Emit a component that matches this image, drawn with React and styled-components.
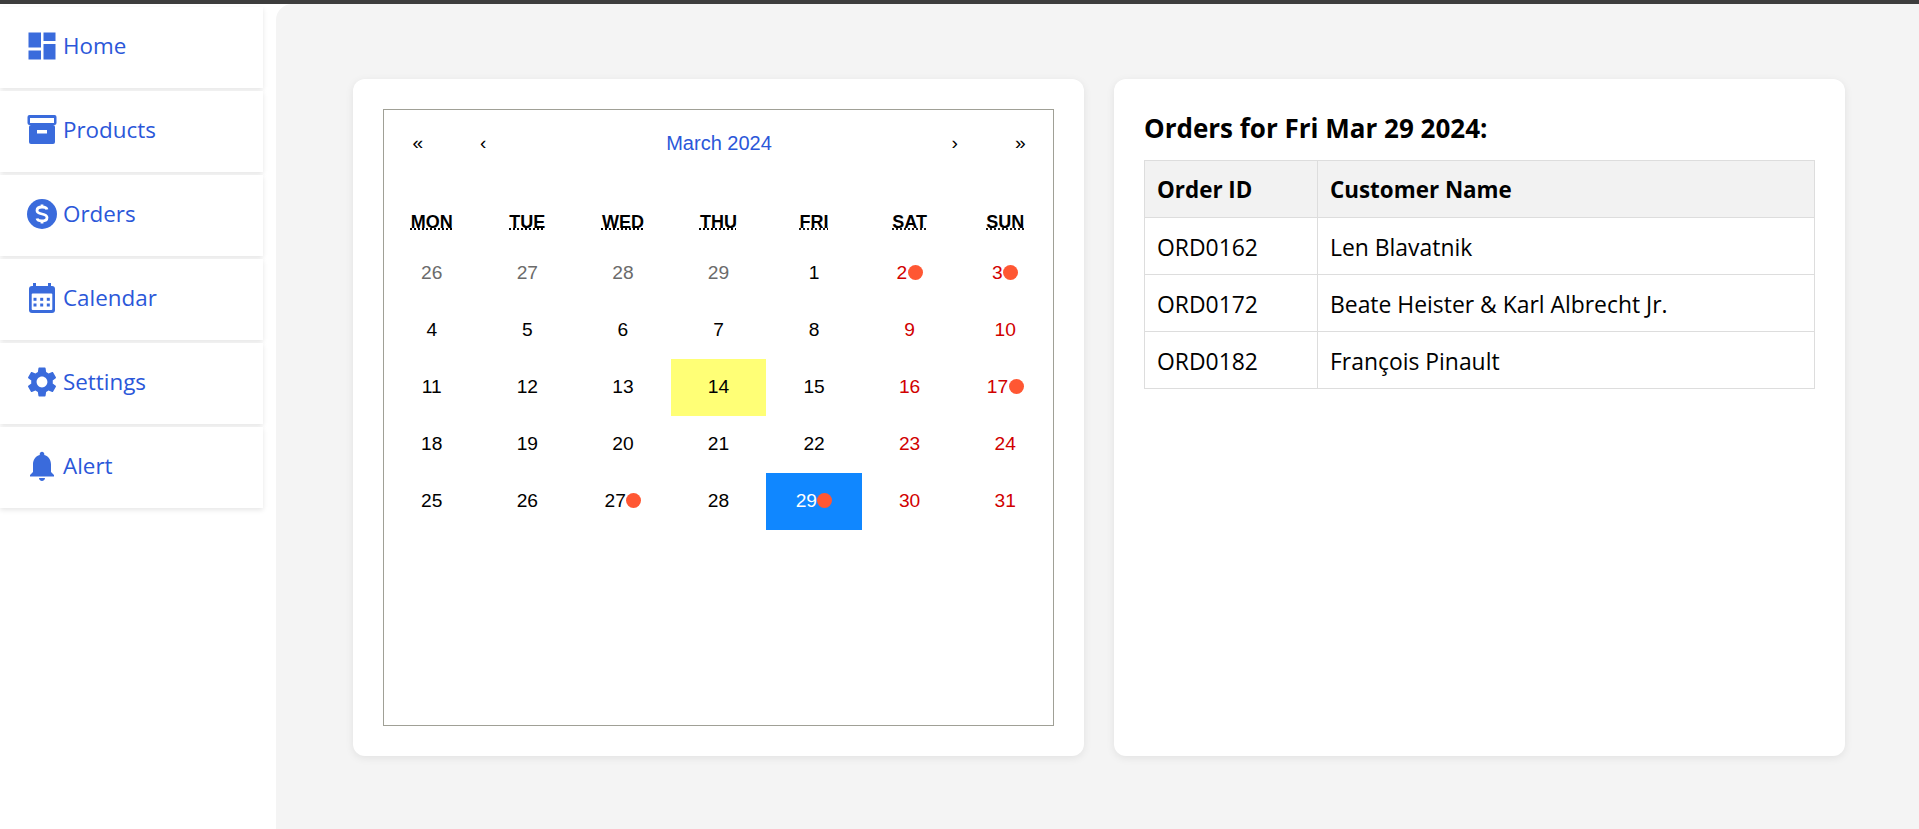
import React from 'react';
import styled, {createGlobalStyle} from 'styled-components';

const Global = createGlobalStyle`
    html, body {
        margin: 0;
        padding: 0;
        background: #fff;
    }
    * {
        box-sizing: border-box;
    }
`;

const Styled = {
    Page: styled.div`
        height: 100vh;
        display: flex;
        flex-direction: column;
        overflow: hidden;
        font-family: "Open Sans", "Noto Sans", sans-serif;
    `,
    TopBar: styled.div`
        height: 4px;
        flex: none;
        background: #3d3d3d;
    `,
    Body: styled.div`
        flex: 1;
        display: flex;
        min-height: 0;
    `,
    Sidebar: styled.nav`
        width: 276px;
        flex: none;
        padding-top: 3px;
        display: flex;
        flex-direction: column;
        gap: 3px;
    `,
    NavItem: styled.a`
        width: 263px;
        height: 81px;
        padding: 0 0 3px 27px;
        display: flex;
        align-items: center;
        gap: 6px;
        background: #fff;
        box-shadow: 0 2px 5px rgba(0, 0, 0, 0.1);
        color: #2b57d9;
        font-size: 22.4px;
        line-height: 30px;
    `,
    Icon: styled.svg`
        width: 30px;
        height: 30px;
        flex: none;
        display: block;
        fill: #3a6bdc;
    `,
    Main: styled.main`
        flex: 1;
        display: flex;
        gap: 30px;
        align-items: flex-start;
        padding: 75px 74px 0 77px;
        background: #f4f4f4;
        border-top-left-radius: 16px;
    `,
    Card: styled.section`
        width: 731px;
        height: 677px;
        padding: 30px;
        background: #fff;
        border-radius: 12px;
        box-shadow: 0 2px 8px rgba(0, 0, 0, 0.08);
    `,
    Calendar: styled.div`
        height: 100%;
        border: 1px solid #a0a096;
        font-family: "Liberation Sans", Arial, sans-serif;
    `,
    CalendarNav: styled.div`
        height: 66px;
        padding-left: 1px;
        display: flex;
        align-items: center;
    `,
    NavButton: styled.span`
        width: 65.5px;
        flex: none;
        text-align: center;
        font-size: 19.2px;
        color: #000;
    `,
    NavLabel: styled.span`
        flex: 1;
        text-align: center;
        font-size: 20px;
        color: #2b57d9;
    `,
    Weekdays: styled.div`
        height: 69px;
        padding-top: 36px;
        display: grid;
        grid-template-columns: repeat(7, 1fr);
    `,
    Weekday: styled.abbr`
        text-align: center;
        font-size: 18px;
        line-height: 21px;
        font-weight: 700;
        color: #000;
        text-decoration: underline dotted;
    `,
    Days: styled.div`
        display: grid;
        grid-template-columns: repeat(7, 1fr);
        grid-auto-rows: 57px;
    `,
    Day: styled.div`
        display: flex;
        align-items: center;
        justify-content: center;
        padding-bottom: 1px;
        font-size: 19.2px;
        color: ${p => ({muted: '#6b6b6b', weekend: '#d10000', active: '#fff'}[p.$tone] || '#000')};
        background: ${p => ({today: '#ffff76', active: '#1087ff'}[p.$tone] || 'transparent')};
    `,
    Dot: styled.span`
        width: 15px;
        height: 15px;
        margin: 0 0 1px 0.5px;
        border-radius: 50%;
        background: #ff5733;
    `,
    Title: styled.h2`
        margin: 0 0 13px;
        font-size: 26px;
        line-height: 38px;
        font-weight: 700;
        color: #000;
    `,
    Table: styled.table`
        width: 100%;
        border-collapse: collapse;
        table-layout: fixed;
        color: #000;
    `,
    Th: styled.th`
        height: 57px;
        padding: 1px 12px 0;
        text-align: left;
        font-size: 22.4px;
        font-weight: 700;
        background: #f2f2f2;
        border: 1px solid #ddd;
        width: ${p => p.$width || 'auto'};
    `,
    Td: styled.td`
        height: 57px;
        padding: 2px 12px 0;
        font-size: 22.9px;
        border: 1px solid #ddd;
    `
};

const HomeIcon = () => (
    <Styled.Icon viewBox="0 0 30 30">
        <rect x="1.5" y="1.5" width="12.5" height="15" />
        <rect x="16.5" y="1.5" width="12" height="8.5" />
        <rect x="1.5" y="19.5" width="12.5" height="9" />
        <rect x="16.5" y="13" width="12" height="15.5" />
    </Styled.Icon>
);

const ProductsIcon = () => (
    <Styled.Icon viewBox="0 0 30 30">
        <rect x="0.5" y="0" width="29" height="10" rx="2" />
        <rect x="3" y="3" width="24" height="5" fill="#fff" />
        <rect x="2" y="10" width="26" height="19" rx="2" />
        <rect x="10" y="15" width="10" height="3.5" fill="#fff" />
    </Styled.Icon>
);

const OrdersIcon = () => (
    <Styled.Icon viewBox="0 0 30 30">
        <circle cx="15" cy="15" r="15" />
        <path
            d="M20 10.5C19.5 8.5 17.5 8 15 8c-3 0-5 1.3-5 3.5 0 2.5 2.5 3 5 3.5s5 1 5 3.5c0 2.2-2 3.5-5 3.5-2.5 0-4.5-.5-5-2.5M15 5.5V8m0 14v2.5"
            fill="none"
            stroke="#fff"
            strokeWidth="2.8"
        />
    </Styled.Icon>
);

const CalendarIcon = () => (
    <Styled.Icon viewBox="0 0 30 30">
        <rect x="2" y="3" width="26" height="27" rx="3" />
        <rect x="6" y="0" width="3" height="5" />
        <rect x="21" y="0" width="3" height="5" />
        <rect x="4.7" y="10.5" width="20.6" height="16.5" rx="1" fill="#fff" />
        {[6.5, 13.2, 19.8].map(x => [14.8, 20.5].map(y => (
            <rect key={`${x}-${y}`} x={x} y={y} width="3" height="3" />
        )))}
    </Styled.Icon>
);

const SettingsIcon = () => (
    <Styled.Icon viewBox="2 2 20 20">
        <path d="M19.14 12.94c.04-.3.06-.61.06-.94 0-.32-.02-.64-.07-.94l2.03-1.58c.18-.14.23-.41.12-.61l-1.92-3.32c-.12-.22-.37-.29-.59-.22l-2.39.96c-.5-.38-1.03-.7-1.62-.94l-.36-2.54c-.04-.24-.24-.41-.48-.41h-3.84c-.24 0-.43.17-.47.41l-.36 2.54c-.59.24-1.13.57-1.62.94l-2.39-.96c-.22-.08-.47 0-.59.22L2.74 8.87c-.12.21-.08.47.12.61l2.03 1.58c-.05.3-.09.63-.09.94s.02.64.07.94l-2.03 1.58c-.18.14-.23.41-.12.61l1.92 3.32c.12.22.37.29.59.22l2.39-.96c.5.38 1.03.7 1.62.94l.36 2.54c.05.24.24.41.48.41h3.84c.24 0 .44-.17.47-.41l.36-2.54c.59-.24 1.13-.56 1.62-.94l2.39.96c.22.08.47 0 .59-.22l1.92-3.32c.12-.22.07-.47-.12-.61l-2.01-1.58zM12 15.6c-1.98 0-3.6-1.62-3.6-3.6s1.62-3.6 3.6-3.6 3.6 1.62 3.6 3.6-1.62 3.6-3.6 3.6z" />
    </Styled.Icon>
);

const AlertIcon = () => (
    <Styled.Icon viewBox="2 2 20 20">
        <path d="M12 22c1.1 0 2-.9 2-2h-4c0 1.1.89 2 2 2zm6-6v-5c0-3.07-1.64-5.64-4.5-6.32V4c0-.83-.67-1.5-1.5-1.5s-1.5.67-1.5 1.5v.68C7.63 5.36 6 7.92 6 11v5l-2 2v1h16v-1l-2-2z" />
    </Styled.Icon>
);

const navItems = [
    {label: 'Home', icon: <HomeIcon />},
    {label: 'Products', icon: <ProductsIcon />},
    {label: 'Orders', icon: <OrdersIcon />},
    {label: 'Calendar', icon: <CalendarIcon />},
    {label: 'Settings', icon: <SettingsIcon />},
    {label: 'Alert', icon: <AlertIcon />}
];

const weekdays = ['MON', 'TUE', 'WED', 'THU', 'FRI', 'SAT', 'SUN'];

const withOrders = [2, 3, 17, 27, 29];

const toneOf = (day, index) => {
    if (index < 4) return 'muted';
    if (day === 14) return 'today';
    if (day === 29) return 'active';
    return index % 7 >= 5 ? 'weekend' : 'plain';
};

const days = [26, 27, 28, 29, ...Array.from({length: 31}, (_, i) => i + 1)];

const orders = [
    {id: 'ORD0162', name: 'Len Blavatnik'},
    {id: 'ORD0172', name: 'Beate Heister & Karl Albrecht Jr.'},
    {id: 'ORD0182', name: 'François Pinault'}
];

const App = () => (
    <Styled.Page>
        <Global />
        <Styled.TopBar />
        <Styled.Body>
            <Styled.Sidebar>
                {navItems.map(item => (
                    <Styled.NavItem key={item.label}>
                        {item.icon}
                        {item.label}
                    </Styled.NavItem>
                ))}
            </Styled.Sidebar>
            <Styled.Main>
                <Styled.Card>
                    <Styled.Calendar>
                        <Styled.CalendarNav>
                            <Styled.NavButton>«</Styled.NavButton>
                            <Styled.NavButton>‹</Styled.NavButton>
                            <Styled.NavLabel>March 2024</Styled.NavLabel>
                            <Styled.NavButton>›</Styled.NavButton>
                            <Styled.NavButton>»</Styled.NavButton>
                        </Styled.CalendarNav>
                        <Styled.Weekdays>
                            {weekdays.map(name => (
                                <Styled.Weekday key={name}>{name}</Styled.Weekday>
                            ))}
                        </Styled.Weekdays>
                        <Styled.Days>
                            {days.map((day, index) => (
                                <Styled.Day key={index} $tone={toneOf(day, index)}>
                                    {day}
                                    {index >= 4 && withOrders.includes(day) && <Styled.Dot />}
                                </Styled.Day>
                            ))}
                        </Styled.Days>
                    </Styled.Calendar>
                </Styled.Card>
                <Styled.Card>
                    <Styled.Title>Orders for Fri Mar 29 2024:</Styled.Title>
                    <Styled.Table>
                        <thead>
                            <tr>
                                <Styled.Th $width="173px">Order ID</Styled.Th>
                                <Styled.Th>Customer Name</Styled.Th>
                            </tr>
                        </thead>
                        <tbody>
                            {orders.map(order => (
                                <tr key={order.id}>
                                    <Styled.Td>{order.id}</Styled.Td>
                                    <Styled.Td>{order.name}</Styled.Td>
                                </tr>
                            ))}
                        </tbody>
                    </Styled.Table>
                </Styled.Card>
            </Styled.Main>
        </Styled.Body>
    </Styled.Page>
);

export default App;
